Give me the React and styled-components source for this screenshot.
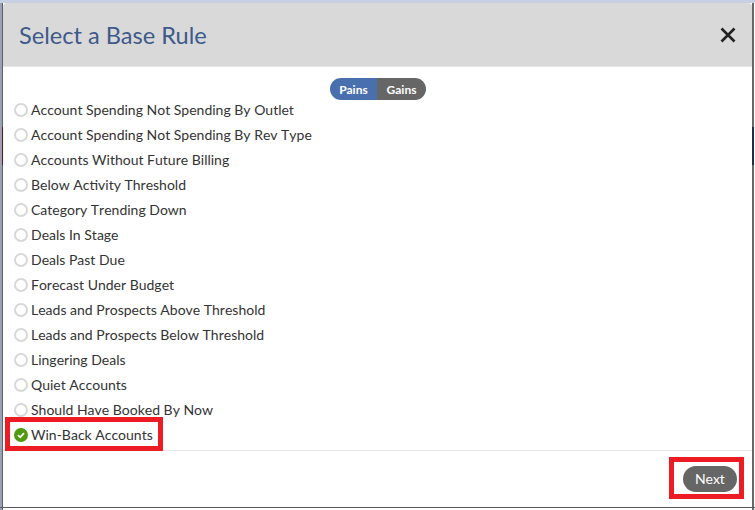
import styled, { createGlobalStyle } from "styled-components";
import { useState } from "react";

const GlobalStyle = createGlobalStyle`
  html, body {
    margin: 0;
    padding: 0;
    height: 100%;
    overflow: hidden;
  }
  body {
    font-family: Lato, "Open Sans", sans-serif;
  }
`

// the page behind the dialog only shows as thin strips round its edge
const Backdrop = styled.div`
  width: 755px;
  height: 510px;
  box-sizing: border-box;
  padding: 3px 3px 3px 3px;
  background-color: #fff;
  background-repeat: no-repeat;
  background-image:
    linear-gradient(#c5d0e3, #c5d0e3),
    linear-gradient(#5a5a5e, #5a5a5e),
    linear-gradient(#9aa3b5, #9aa3b5),
    linear-gradient(#7b0a14, #7b0a14),
    linear-gradient(#5f6064, #5f6064),
    linear-gradient(#1d2e55, #1d2e55),
    linear-gradient(#68686a, #68686a);
  background-size:
    100% 3px,
    100% 1px,
    2px 100%,
    1px 38px,
    1px 100%,
    2px 38px,
    2px 100%;
  background-position:
    0 0,
    0 507px,
    0 0,
    2px 127px,
    2px 0,
    752px 127px,
    752px 0;
`

const Modal = styled.div`
  position: relative;
  height: 100%;
  background: #fff;
  border-radius: 4px 4px 8px 8px;
  overflow: hidden;
  display: flex;
  flex-direction: column;
`

const Header = styled.div`
  height: 64px;
  flex: none;
  box-sizing: border-box;
  padding: 0 16px;
  background: #d9d9d9;
  border-bottom: 1px solid #e5e5e5;
  display: flex;
  align-items: center;
  justify-content: space-between;
`

const Title = styled.h2`
  margin: 0;
  font-size: 23.6px;
  font-weight: 400;
  color: #3d5a8a;
`

const CloseIcon = styled.svg`
  width: 16px;
  height: 16px;
  display: block;
`

const Body = styled.div`
  flex: 1;
  min-height: 0;
  padding: 11px 10px 0;
  display: flex;
  flex-direction: column;
`

const Toggle = styled.div`
  align-self: center;
  display: flex;
  height: 22px;
  margin-left: 1px;
  margin-bottom: -3px;
  border-radius: 11px;
  overflow: hidden;
`

const ToggleSide = styled.span`
  width: ${(p) => (p.$active ? "47px" : "49px")};
  display: flex;
  align-items: center;
  justify-content: center;
  font-size: 12px;
  font-weight: 700;
  color: #fff;
  background: ${(p) => (p.$active ? "#4a6fae" : "#666666")};
`

const RuleList = styled.div`
  display: flex;
  flex-direction: column;
`

const RuleRow = styled.div`
  height: 25px;
  display: flex;
  align-items: center;
  gap: 3px;
  padding-left: 1px;
  font-size: 14px;
  font-kerning: none;
  color: #333;
`

const Radio = styled.span`
  width: 14px;
  height: 14px;
  flex: none;
  box-sizing: border-box;
  border-radius: 50%;
  border: 2px solid #d8d8d8;
  background: #fff;
`

const CheckIcon = styled.svg`
  width: 14px;
  height: 14px;
  flex: none;
  display: block;
`

const Footer = styled.div`
  height: 57px;
  flex: none;
  box-sizing: border-box;
  border-top: 1px solid #e5e5e5;
  display: flex;
  align-items: flex-start;
  justify-content: flex-end;
  padding: 15px 15px 0 0;
`

const NextButton = styled.button`
  width: 54px;
  height: 26px;
  padding: 0 0 2px;
  border: 0;
  border-radius: 13px;
  background: #666666;
  color: #fff;
  font-family: inherit;
  font-size: 14px;
`

const Callout = styled.div`
  position: absolute;
  box-sizing: border-box;
  border: 5px solid #ed1c24;
  left: ${(p) => p.$left}px;
  top: ${(p) => p.$top}px;
  width: ${(p) => p.$width}px;
  height: ${(p) => p.$height}px;
  pointer-events: none;
`

const rules = [
  "Account Spending Not Spending By Outlet",
  "Account Spending Not Spending By Rev Type",
  "Accounts Without Future Billing",
  "Below Activity Threshold",
  "Category Trending Down",
  "Deals In Stage",
  "Deals Past Due",
  "Forecast Under Budget",
  "Leads and Prospects Above Threshold",
  "Leads and Prospects Below Threshold",
  "Lingering Deals",
  "Quiet Accounts",
  "Should Have Booked By Now",
  "Win-Back Accounts",
];

const App = () => {
  const [selected] = useState("Win-Back Accounts");

  return (
    <Backdrop>
      <GlobalStyle />
      <Modal>
        <Header>
          <Title>Select a Base Rule</Title>
          <CloseIcon viewBox="0 0 16 16">
            <path d="M1.5 1.5L14.5 14.5M14.5 1.5L1.5 14.5" stroke="#222" strokeWidth="2.6" fill="none" />
          </CloseIcon>
        </Header>
        <Body>
          <Toggle>
            <ToggleSide $active>Pains</ToggleSide>
            <ToggleSide>Gains</ToggleSide>
          </Toggle>
          <RuleList>
            {rules.map((rule) => (
              <RuleRow key={rule}>
                {rule === selected ? (
                  <CheckIcon viewBox="0 0 14 14">
                    <circle cx="7" cy="7" r="7" fill="#4f9a0e" />
                    <path d="M4 7.2L6.2 9.3L10 5.2" stroke="#fff" strokeWidth="1.8" fill="none" />
                  </CheckIcon>
                ) : (
                  <Radio />
                )}
                {rule}
              </RuleRow>
            ))}
          </RuleList>
        </Body>
        <Footer>
          <NextButton>Next</NextButton>
        </Footer>
        <Callout $left={2} $top={414} $width={158} $height={34} />
        <Callout $left={666} $top={454} $width={75} $height={42} />
      </Modal>
    </Backdrop>
  );
};

export default App;
